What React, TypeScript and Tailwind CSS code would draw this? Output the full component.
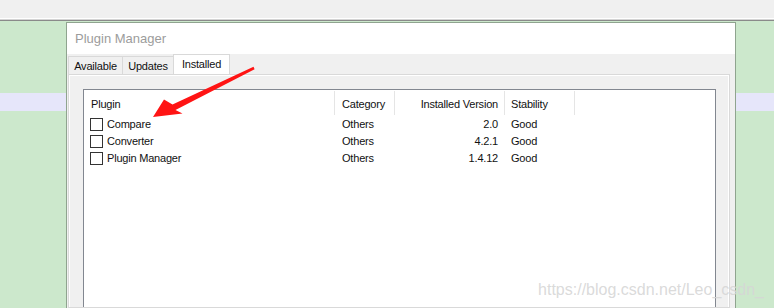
import React from 'react';

const plugins = [
  { name: 'Compare', category: 'Others', version: '2.0', stability: 'Good' },
  { name: 'Converter', category: 'Others', version: '4.2.1', stability: 'Good' },
  { name: 'Plugin Manager', category: 'Others', version: '1.4.12', stability: 'Good' },
];

const cols = 'grid grid-cols-[250px_1px_59px_1px_109px_1px_69px_1px]';

const Side = () => (
  <div className="flex w-full flex-col">
    <div className="h-[72px] bg-[#cce8cc]" />
    <div className="h-[18px] bg-[#e6e6fa]" />
    <div className="flex-1 bg-[#cce8cc]" />
  </div>
);

const Arrow = () => (
  <svg className="pointer-events-none absolute left-0 top-0" width="774" height="308">
    <polygon
      points="153,117 164,99.5 172.5,104.5 253.5,66.8 254.6,69.2 175.5,110 182.5,113.5"
      fill="#ff1414"
    />
  </svg>
);

const App = () => {
  return (
    <div className="relative h-[308px] w-[774px] overflow-hidden bg-[#cce8cc] font-['Liberation_Sans',Arial,sans-serif] text-[11px] tracking-[-0.2px] text-[#111]">
      {/* editor toolbar strip behind the dialog */}
      <div className="h-[18px] bg-[#f0f0f0]" />
      <div className="h-px bg-white" />
      <div className="h-px bg-[#d4d4d4]" />
      <div className="h-px bg-[#8a8a8a]" />

      <div className="flex h-[287px]">
        <div className="flex w-[66px]">
          <Side />
        </div>

        {/* dialog */}
        <div className="mt-px flex w-[670px] flex-col border-x border-t border-[#8fa48f] bg-[#f0f0f0]">
          <div className="h-[31px] bg-white pl-[8px] text-[13px] leading-[31px] tracking-normal text-[#9c9c9c]">
            Plugin Manager
          </div>

          <div className="flex h-[20px] items-end pl-[1px]">
            <div className="h-[18px] w-[55px] border-x border-t border-[#d9d9d9] bg-[#f0f0f0] pt-px text-center leading-[17px]">
              Available
            </div>
            <div className="-ml-px h-[18px] w-[52px] border-x border-t border-[#d9d9d9] bg-[#f0f0f0] pt-px text-center leading-[17px]">
              Updates
            </div>
            <div className="-ml-px h-[20px] w-[57px] border-x border-t border-[#d9d9d9] bg-white pt-px text-center leading-[17px]">
              Installed
            </div>
          </div>

          <div className="ml-[1px] flex w-[662px] flex-1 flex-col border border-[#d9d9d9] bg-[#f0f0f0] pl-[14px] pr-[13px] pt-[14px] shadow-[inset_1px_1px_0_#fff,inset_-1px_0_0_#fff]">
            <div className="flex-1 border-x border-t border-[#828790] bg-white">
              <div className={`${cols} h-[25px] pt-[2px] leading-[24px]`}>
                <div className="pl-[7px]">Plugin</div>
                <div className="-mt-px mb-px bg-[#e5e5e5]" />
                <div className="pl-[7px]">Category</div>
                <div className="-mt-px mb-px bg-[#e5e5e5]" />
                <div className="pr-[6px] text-right">Installed Version</div>
                <div className="-mt-px mb-px bg-[#e5e5e5]" />
                <div className="pl-[6px]">Stability</div>
                <div className="-mt-px mb-px bg-[#e5e5e5]" />
              </div>

              {plugins.map((p) => (
                <div key={p.name} className={`${cols} h-[17px] leading-[17px]`}>
                  <div className="flex items-center pl-[6px]">
                    <span className="h-[13px] w-[13px] border border-[#333] bg-white" />
                    <span className="ml-[4px] pt-px">{p.name}</span>
                  </div>
                  <div />
                  <div className="pl-[7px] pt-px">{p.category}</div>
                  <div />
                  <div className="pr-[6px] pt-px text-right">{p.version}</div>
                  <div />
                  <div className="pl-[6px] pt-px">{p.stability}</div>
                  <div />
                </div>
              ))}
            </div>
          </div>
        </div>

        <div className="flex flex-1">
          <Side />
        </div>
      </div>

      <Arrow />

      <div className="pointer-events-none absolute right-[10px] top-[282px] text-[16px] leading-[16px] tracking-normal text-[rgba(214,214,214,0.9)]">
        https://blog.csdn.net/Leo_csdn_
      </div>
    </div>
  );
};

export default App;
